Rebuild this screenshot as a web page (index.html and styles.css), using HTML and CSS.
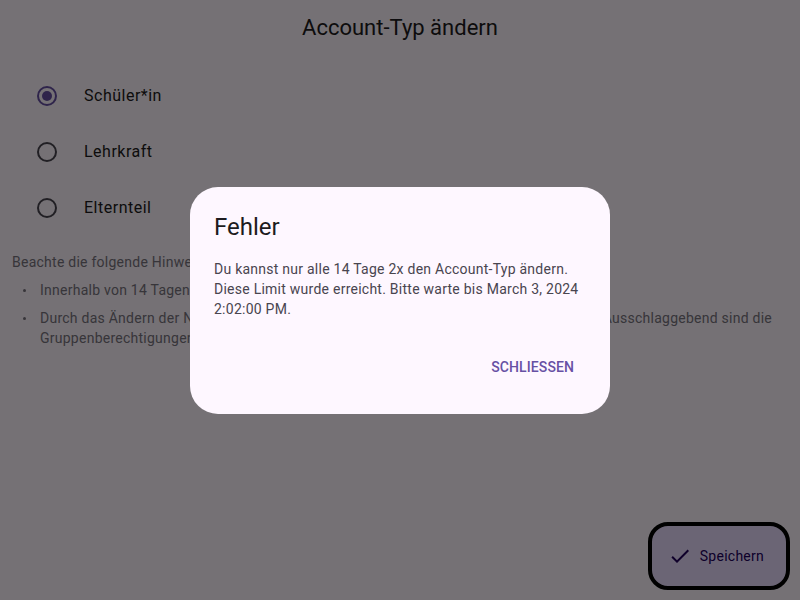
FILE: index.html
```html
<!DOCTYPE html>
<html lang="de">
<head>
<meta charset="utf-8">
<title>Account-Typ ändern</title>
<link rel="stylesheet" href="styles.css">
</head>
<body>
<div class="page">
  <header class="appbar"><h1 class="appbar-title">Account-Typ ändern</h1></header>
  <ul class="radios">
    <li class="radio-row"><span class="radio selected"></span><span class="radio-label">Schüler*in</span></li>
    <li class="radio-row"><span class="radio"></span><span class="radio-label">Lehrkraft</span></li>
    <li class="radio-row"><span class="radio"></span><span class="radio-label">Elternteil</span></li>
  </ul>
  <section class="hints">
    <p class="hints-head">Beachte die folgende Hinweise:</p>
    <ul class="hint-list">
      <li><span>Innerhalb von 14 Tagen kannst du den Account-Typ nur zweimal ändern.</span></li>
      <li><span>Durch das Ändern der Nutzerrolle ändern sich nicht deine Rechte in all deinen Gruppen. Ausschlaggebend sind die Gruppenberechtigungen.</span></li>
    </ul>
  </section>
  <button class="fab" type="button">
    <svg class="fab-icon" viewBox="0 0 24 24" width="24" height="24"><path d="M9 16.17L4.830 12l-1.42 1.41L9 19 21 7l-1.41-1.41z"/></svg>
    <span>Speichern</span>
  </button>
</div>
<div class="barrier">
  <div class="dialog" role="alertdialog">
    <h2 class="dialog-title">Fehler</h2>
    <p class="dialog-body">Du kannst nur alle 14 Tage 2x den Account-Typ ändern. Diese Limit wurde erreicht. Bitte warte bis March 3, 2024 2:02:00 PM.</p>
    <div class="dialog-actions"><button class="text-btn" type="button">SCHLIESSEN</button></div>
  </div>
</div>
</body>
</html>
```
FILE: styles.css
```css
* { box-sizing: border-box; }
html, body { margin: 0; padding: 0; }
body {
  width: 800px;
  height: 600px;
  overflow: hidden;
  background: #fef7ff;
  font-family: Roboto, "Liberation Sans", sans-serif;
  color: #1d1b20;
}
.page { height: 600px; }
.appbar {
  height: 56px;
  display: flex;
  align-items: center;
  justify-content: center;
}
.appbar-title {
  margin: 0;
  font-size: 22px;
  font-weight: 400;
  line-height: 28px;
}
.radios {
  list-style: none;
  margin: 12px 0 0;
  padding: 0;
}
.radio-row {
  height: 56px;
  display: flex;
  align-items: center;
  padding-left: 37px;
  gap: 27px;
}
.radio {
  width: 20px;
  height: 20px;
  border: 2px solid #49454f;
  border-radius: 50%;
  display: flex;
  align-items: center;
  justify-content: center;
}
.radio.selected { border-color: #6750a4; }
.radio.selected::after {
  content: "";
  width: 10px;
  height: 10px;
  border-radius: 50%;
  background: #6750a4;
}
.radio-label {
  font-size: 16px;
  letter-spacing: 0.5px;
  line-height: 24px;
}
.hints {
  padding: 16px 12px 0;
  color: #79747e;
  font-size: 14px;
  letter-spacing: 0.25px;
  line-height: 20px;
}
.hints-head { margin: 0; }
.hint-list {
  list-style: none;
  margin: 8px 0 0;
  padding: 0 0 0 11px;
}
.hint-list li {
  display: flex;
  align-items: flex-start;
  margin-bottom: 8px;
}
.hint-list li::before {
  content: "";
  flex: 0 0 3px;
  height: 3px;
  margin: 9px 14px 0 0;
  border-radius: 50%;
  background: #79747e;
}
.fab {
  position: fixed;
  right: 10px;
  bottom: 10px;
  height: 68px;
  padding: 0 22px 0 16px;
  display: flex;
  align-items: center;
  gap: 8px;
  border: 4px solid #000;
  border-radius: 20px;
  background: #eaddff;
  color: #21005d;
  font-family: inherit;
  font-size: 14px;
  font-weight: 400;
  letter-spacing: 0.25px;
}
.fab-icon { fill: #21005d; }
.barrier {
  position: fixed;
  inset: 0;
  background: rgba(0, 0, 0, 0.54);
  display: flex;
  align-items: center;
  justify-content: center;
}
.dialog {
  width: 420px;
  background: #fef7ff;
  border-radius: 28px;
  padding: 24px 24px 27px;
}
.dialog-title {
  margin: 0 0 16px;
  font-size: 24px;
  font-weight: 400;
  line-height: 32px;
  color: #1d1b20;
}
.dialog-body {
  margin: 0 0 28px;
  font-size: 14px;
  line-height: 20px;
  letter-spacing: 0.25px;
  color: #49454f;
}
.dialog-actions {
  display: flex;
  justify-content: flex-end;
}
.text-btn {
  height: 40px;
  padding: 0 12px;
  border: none;
  background: transparent;
  color: #6750a4;
  font-family: inherit;
  font-size: 14px;
  font-weight: 500;
  letter-spacing: 0.1px;
}
```
